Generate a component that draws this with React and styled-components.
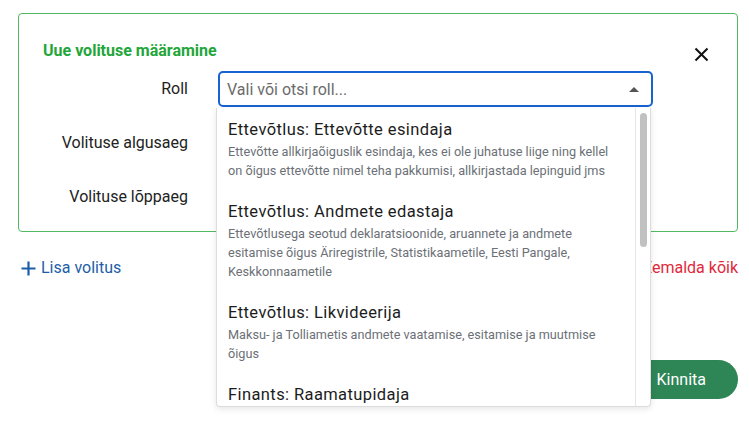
import React from 'react';
import styled, { createGlobalStyle } from 'styled-components';

const GlobalStyle = createGlobalStyle`
  html, body {
    margin: 0;
    padding: 0;
    background: #fff;
  }
  body {
    font-family: Roboto, "Noto Sans", "Liberation Sans", sans-serif;
    color: #222;
  }
`;

const Page = styled.div`
  min-height: 100vh;
  box-sizing: border-box;
  padding: 13px 11px 0 18px;
`;

const Card = styled.section`
  position: relative;
  border: 1px solid #52b963;
  border-radius: 4px;
  padding: 27px 24px 16px;
`;

const Title = styled.h2`
  margin: 0;
  font-size: 16px;
  line-height: 20px;
  font-weight: 700;
  color: #22a63a;
`;

const CloseButton = styled.button`
  position: absolute;
  top: 30px;
  right: 26px;
  width: 20px;
  height: 20px;
  padding: 0;
  border: 0;
  background: none;
  display: flex;
  align-items: center;
  justify-content: center;
  cursor: pointer;
`;

const FormGrid = styled.div`
  margin-top: 10px;
  display: grid;
  grid-template-columns: 145px 435px;
  column-gap: 30px;
  row-gap: 18px;
  align-items: center;
`;

const Label = styled.label`
  text-align: right;
  font-size: 16px;
  line-height: 24px;
  color: #222;
`;

const SelectWrap = styled.div`
  position: relative;
  z-index: 5;
`;

const SelectBox = styled.div`
  height: 36px;
  box-sizing: border-box;
  border: 2px solid ${(p) => (p.$focused ? '#1763cf' : '#c9c9c9')};
  border-radius: 5px;
  display: flex;
  align-items: center;
  padding: 0 12px 0 7px;
  background: #fff;
`;

const Placeholder = styled.span`
  flex: 1;
  font-size: 16px;
  color: #6b6b6b;
`;

const Caret = styled.span`
  width: 0;
  height: 0;
  border-left: 5px solid transparent;
  border-right: 5px solid transparent;
  border-bottom: 5px solid #555;
`;

const Menu = styled.div`
  position: absolute;
  top: 100%;
  left: -2px;
  right: 2px;
  margin-top: 1px;
  height: 298px;
  display: flex;
  background: #fff;
  border: 1px solid #dcdcdc;
  border-top: 0;
  border-radius: 0 0 4px 4px;
  box-shadow: 0 2px 6px rgb(0 0 0 / 10%);
  overflow: hidden;
`;

const OptionList = styled.ul`
  flex: 1;
  margin: 0;
  padding: 0;
  list-style: none;
  overflow: hidden;
`;

const ScrollTrack = styled.div`
  width: 15px;
  box-sizing: border-box;
  border-left: 1px solid #e6e6e6;
  padding: 5px 3px 5px 4px;
`;

const ScrollThumb = styled.div`
  height: 134px;
  border-radius: 4px;
  background: #c1c1c1;
`;

const Option = styled.li`
  padding: 10px 12px 10px 11px;
  cursor: pointer;
`;

const OptionTitle = styled.div`
  font-size: 16.5px;
  letter-spacing: 0.4px;
  line-height: 24px;
  color: #1c1c1c;
`;

const OptionDesc = styled.div`
  font-size: 12.7px;
  line-height: 19px;
  color: #6c7077;
`;

const DateInput = styled.div`
  width: 200px;
  height: 36px;
  box-sizing: border-box;
  border: 1px solid #c9c9c9;
  border-radius: 5px;
`;

const LinkRow = styled.div`
  margin-top: 24px;
  display: flex;
  justify-content: space-between;
  align-items: center;
`;

const AddLink = styled.button`
  display: flex;
  align-items: center;
  gap: 5px;
  padding: 0 0 0 3px;
  border: 0;
  background: none;
  font-family: inherit;
  font-size: 16px;
  line-height: 24px;
  color: #1d5ea8;
  cursor: pointer;
`;

const RemoveLink = styled.button`
  padding: 0;
  border: 0;
  background: none;
  font-family: inherit;
  font-size: 16px;
  line-height: 24px;
  color: #e0293b;
  cursor: pointer;
`;

const Footer = styled.div`
  margin-top: 80px;
  display: flex;
  justify-content: flex-end;
`;

const PrimaryButton = styled.button`
  height: 39px;
  padding: 0 32px;
  border: 0;
  border-radius: 20px;
  background: #2e8555;
  color: #fff;
  font-family: inherit;
  font-size: 16px;
  cursor: pointer;
`;

const roles = [
  {
    title: 'Ettevõtlus: Ettevõtte esindaja',
    desc: 'Ettevõtte allkirjaõiguslik esindaja, kes ei ole juhatuse liige ning kellel on õigus ettevõtte nimel teha pakkumisi, allkirjastada lepinguid jms',
  },
  {
    title: 'Ettevõtlus: Andmete edastaja',
    desc: 'Ettevõtlusega seotud deklaratsioonide, aruannete ja andmete esitamise õigus Äriregistrile, Statistikaametile, Eesti Pangale, Keskkonnaametile',
  },
  {
    title: 'Ettevõtlus: Likvideerija',
    desc: 'Maksu- ja Tolliametis andmete vaatamise, esitamise ja muutmise õigus',
  },
  {
    title: 'Finants: Raamatupidaja',
    desc: 'Raamatupidamise andmete vaatamise ja deklaratsioonide esitamise õigus Maksu- ja Tolliametis',
  },
  {
    title: 'Finants: Audiitor',
    desc: 'Majandusaasta aruannete ja raamatupidamise andmete vaatamise õigus',
  },
];

const CloseIcon = () => (
  <svg width="15" height="15" viewBox="0 0 15 15" fill="none">
    <path d="M1.5 1.5L13.5 13.5M13.5 1.5L1.5 13.5" stroke="#111" strokeWidth="2" />
  </svg>
);

const PlusIcon = () => (
  <svg width="15" height="15" viewBox="0 0 15 15" fill="none">
    <path d="M7.5 0.5V14.5M0.5 7.5H14.5" stroke="#1d5ea8" strokeWidth="2.2" />
  </svg>
);

export default function App() {
  return (
    <Page>
      <GlobalStyle />
      <Card>
        <Title>Uue volituse määramine</Title>
        <CloseButton aria-label="Sulge">
          <CloseIcon />
        </CloseButton>
        <FormGrid>
          <Label>Roll</Label>
          <SelectWrap>
            <SelectBox $focused>
              <Placeholder>Vali või otsi roll...</Placeholder>
              <Caret />
            </SelectBox>
            <Menu>
              <OptionList>
                {roles.map((r) => (
                  <Option key={r.title}>
                    <OptionTitle>{r.title}</OptionTitle>
                    <OptionDesc>{r.desc}</OptionDesc>
                  </Option>
                ))}
              </OptionList>
              <ScrollTrack>
                <ScrollThumb />
              </ScrollTrack>
            </Menu>
          </SelectWrap>
          <Label>Volituse algusaeg</Label>
          <DateInput />
          <Label>Volituse lõppaeg</Label>
          <DateInput />
        </FormGrid>
      </Card>
      <LinkRow>
        <AddLink>
          <PlusIcon />
          Lisa volitus
        </AddLink>
        <RemoveLink>Eemalda kõik</RemoveLink>
      </LinkRow>
      <Footer>
        <PrimaryButton>Kinnita</PrimaryButton>
      </Footer>
    </Page>
  );
}
